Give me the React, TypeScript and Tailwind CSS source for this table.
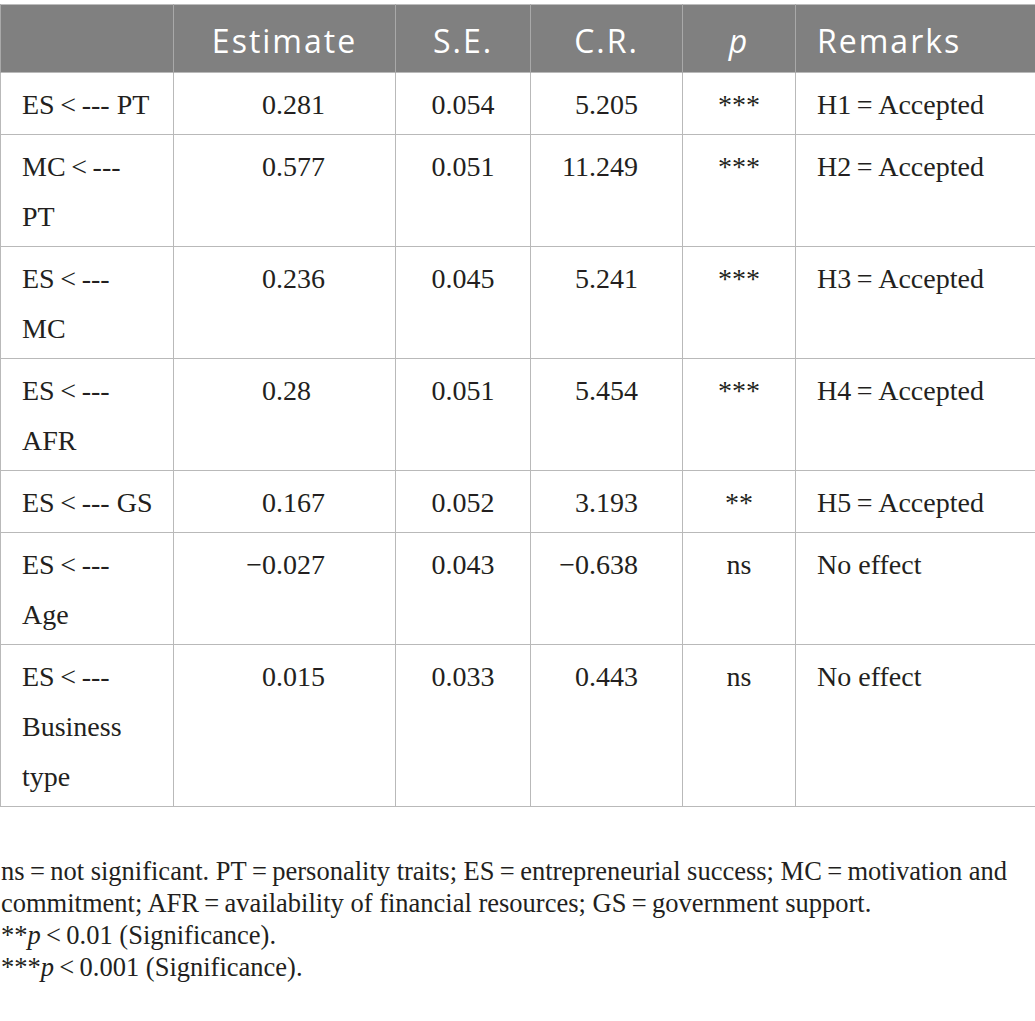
const serif = "font-['Liberation_Serif','Times_New_Roman',serif]";
const sans = "font-['Open_Sans','Liberation_Sans',sans-serif]";

type Row = {
  label: React.ReactNode;
  est: string;
  se: string;
  cr: string;
  p: string;
  remark: string;
};

const T = '\u2009';

const rows: Row[] = [
  { label: <>ES{T}&lt;{T}--- PT</>, est: '0.281', se: '0.054', cr: '5.205', p: '***', remark: `H1${T}=${T}Accepted` },
  { label: <>MC{T}&lt;{T}---<br />PT</>, est: '0.577', se: '0.051', cr: '11.249', p: '***', remark: `H2${T}=${T}Accepted` },
  { label: <>ES{T}&lt;{T}---<br />MC</>, est: '0.236', se: '0.045', cr: '5.241', p: '***', remark: `H3${T}=${T}Accepted` },
  { label: <>ES{T}&lt;{T}---<br />AFR</>, est: '0.28', se: '0.051', cr: '5.454', p: '***', remark: `H4${T}=${T}Accepted` },
  { label: <>ES{T}&lt;{T}--- GS</>, est: '0.167', se: '0.052', cr: '3.193', p: '**', remark: `H5${T}=${T}Accepted` },
  { label: <>ES{T}&lt;{T}---<br />Age</>, est: '\u22120.027', se: '0.043', cr: '\u22120.638', p: 'ns', remark: 'No effect' },
  { label: <>ES{T}&lt;{T}---<br />Business<br />type</>, est: '0.015', se: '0.033', cr: '0.443', p: 'ns', remark: 'No effect' },
];

// decimal-aligned number: integer part in a fixed right-aligned box
function Num({ v }: { v: string }) {
  const [i, f] = v.split('.');
  return (
    <span className="inline-flex">
      <span className="inline-block w-[36px] text-right">{i}</span>
      <span>.{f}</span>
    </span>
  );
}

const cell = 'border border-[#b9b9b9] align-top pt-[7px] pb-[4px] leading-[50px]';
const head = 'border-x border-[#a9a9a9] pt-[17px] pb-[12px] leading-[38px] font-normal text-white text-[32px] tracking-[2px]';

export default function App() {
  return (
    <div className={`w-[1035px] min-h-screen bg-white pt-[4px] text-[#231f20] ${serif}`}>
      <table className="w-[1035px] table-fixed border-collapse text-[28px]">
        <colgroup>
          <col className="w-[173px]" />
          <col className="w-[222px]" />
          <col className="w-[135px]" />
          <col className="w-[152px]" />
          <col className="w-[113px]" />
          <col className="w-[240px]" />
        </colgroup>
        <thead>
          <tr className={`bg-[#808080] border-t border-[#bdbdbd] ${sans}`}>
            <th className={head}></th>
            <th className={`${head} text-center`}>Estimate</th>
            <th className={`${head} text-center`}>S.E.</th>
            <th className={`${head} text-center`}>C.R.</th>
            <th className={`${head} text-center italic`}>p</th>
            <th className={`${head} text-left pl-[21px]`}>Remarks</th>
          </tr>
        </thead>
        <tbody>
          {rows.map((r, idx) => (
            <tr key={idx}>
              <td className={`${cell} pl-[21px]`}>{r.label}</td>
              <td className={`${cell} pl-[66px]`}><Num v={r.est} /></td>
              <td className={`${cell} text-center`}>{r.se}</td>
              <td className={`${cell} pl-[22px]`}><Num v={r.cr} /></td>
              <td className={`${cell} text-center`}>{r.p}</td>
              <td className={`${cell} pl-[21px]`}>{r.remark}</td>
            </tr>
          ))}
        </tbody>
      </table>

      <div className="mt-[48px] pl-[1px] text-[26.5px] leading-[32px] whitespace-nowrap">
        <p>
          ns{T}={T}not significant. PT{T}={T}personality traits; ES{T}={T}entrepreneurial success; MC{T}={T}motivation and
          <br />
          commitment; AFR{T}={T}availability of financial resources; GS{T}={T}government support.
        </p>
        <p>**<i>p</i>{T}&lt;{T}0.01 (Significance).</p>
        <p>***<i>p</i>{T}&lt;{T}0.001 (Significance).</p>
      </div>
    </div>
  );
}
